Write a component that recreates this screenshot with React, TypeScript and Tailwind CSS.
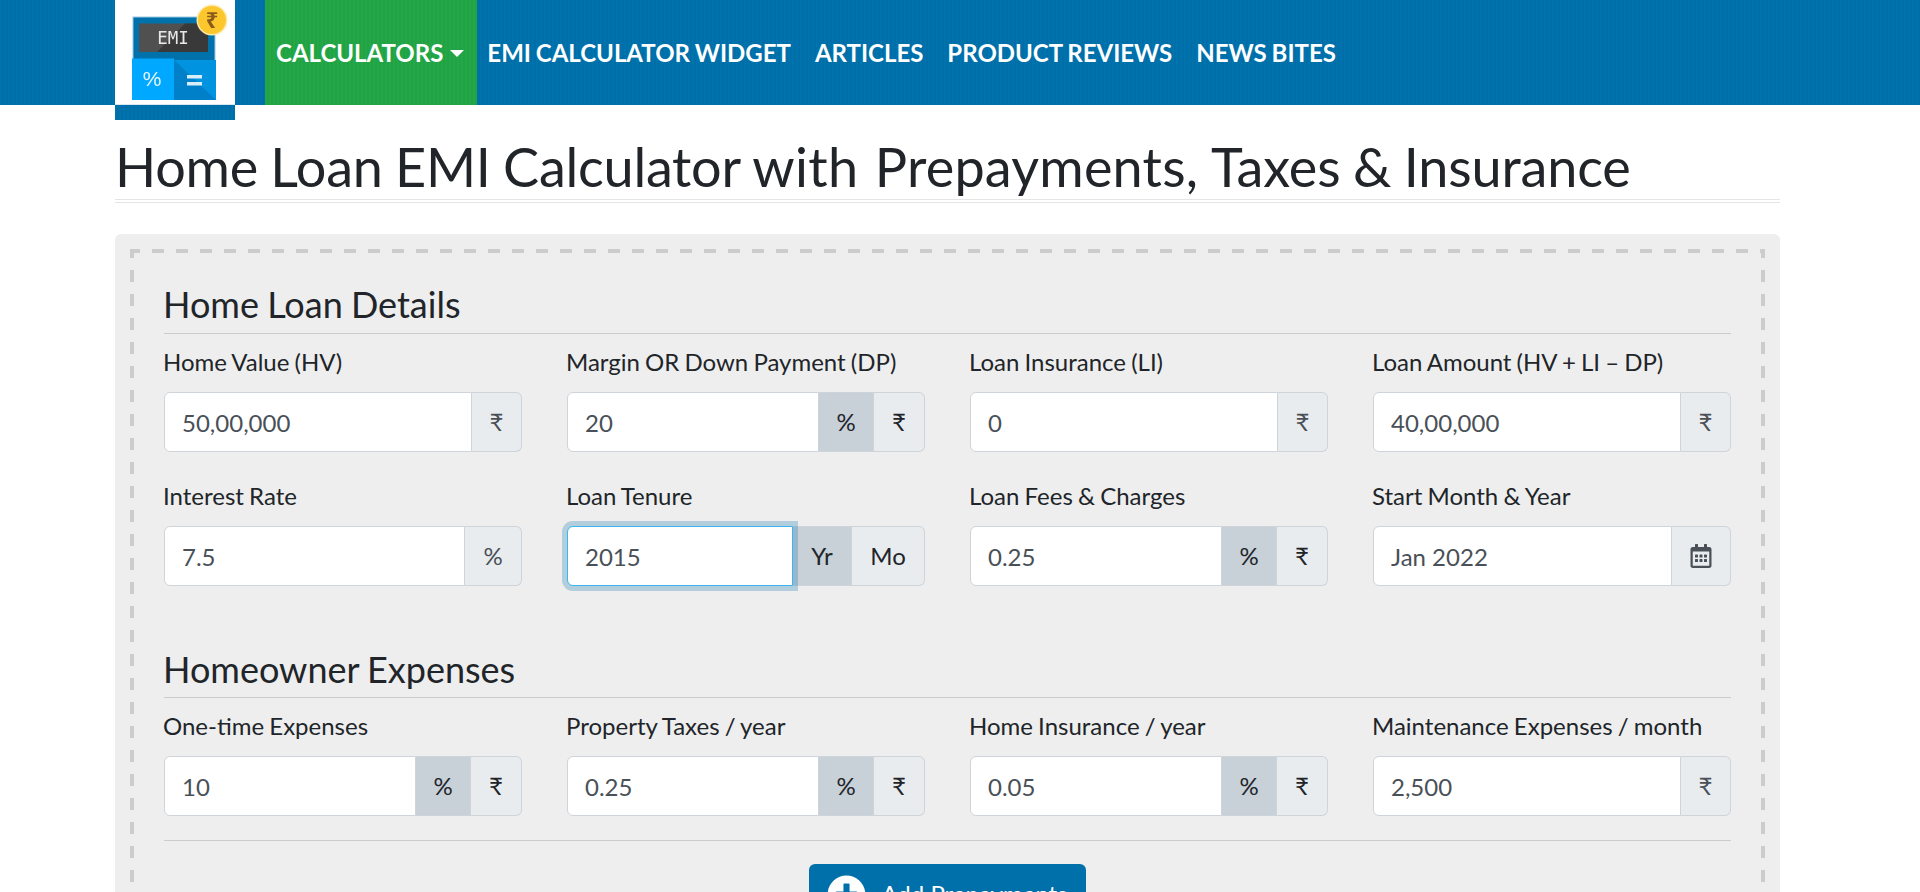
import React from "react";
import { FaRegCalendarAlt, FaPlusCircle } from "react-icons/fa";

type Addon = { t: React.ReactNode; on?: boolean; w: string; muted?: boolean };
const RS: Addon = { t: "₹", w: "w-[51px]" };
const RS_SOLO: Addon = { t: "₹", w: "w-[50px]", muted: true };
const PCT: Addon = { t: "%", on: true, w: "w-[55px]" };

function Field({ label, value, addons, focus }: { label: string; value: string; addons: Addon[]; focus?: boolean }) {
  return (
    <div className="flex flex-col">
      <label className="-ml-[1px] text-[24px] leading-[36px] [word-spacing:-1px] text-[#212529] mb-[12px]">{label}</label>
      <div className="flex h-[60px]">
        <input
          readOnly
          value={value}
          className={
            "min-w-0 flex-1 h-[60px] bg-white rounded-l-[6px] px-[17px] text-[24px] text-[#495057] outline-none border " +
            (focus
              ? "border-[#3cb5f0] relative z-10 shadow-[0_0_0_5px_rgba(0,112,170,0.25)]"
              : "border-[#ced4da]")
          }
        />
        {addons.map((a, i) => (
          <div
            key={i}
            className={
              "flex items-center justify-center h-[60px] text-[24px] border-y border-r border-[#ced4da] " +
              a.w + " " +
              (a.muted ? "text-[#495057] " : "text-[#212529] ") +
              (a.on ? "bg-[#c8d0d8] " : "bg-[#e9ecef] ") +
              (i === addons.length - 1 ? "rounded-r-[6px]" : "")
            }
          >
            {a.t}
          </div>
        ))}
      </div>
    </div>
  );
}

function Logo() {
  return (
    <svg width="120" height="105" viewBox="0 0 120 105" className="block blur-[0.4px]">
      <rect x="18" y="17" width="82" height="44" fill="#0071ab" stroke="#9cc8e2" strokeWidth="1" />
      <rect x="24" y="23.5" width="69" height="28.5" fill="#505050" />
      <polygon points="42,52 70,23.5 93,23.5 93,52" fill="#393939" />
      <text x="58" y="44" textAnchor="middle" fontFamily="'DejaVu Sans Mono', monospace" fontSize="17.5" fill="#e8e8e8">EMI</text>
      <rect x="17" y="58.5" width="42" height="41.5" fill="#00a9ff" />
      <rect x="59" y="60" width="42" height="40" fill="#0093e0" />
      <polygon points="59,60 101,100 59,100" fill="#0080c8" />
      <text x="37" y="85.5" textAnchor="middle" fontFamily="'Liberation Sans', sans-serif" fontSize="21" fill="#e8f6ff">%</text>
      <rect x="72" y="75" width="15" height="3.5" fill="#d9eefb" />
      <rect x="72" y="82" width="15" height="3.5" fill="#d9eefb" />
      <circle cx="97" cy="20" r="15.5" fill="#fdeaa8" />
      <circle cx="97" cy="20" r="14" fill="#fcc62d" />
      <text x="97" y="28" textAnchor="middle" fontFamily="'Noto Sans','DejaVu Sans',sans-serif" fontSize="22" fontWeight="700" fill="#8a5a1c">₹</text>
    </svg>
  );
}

const NAV = ["EMI CALCULATOR WIDGET", "ARTICLES", "PRODUCT REVIEWS", "NEWS BITES"];
const BLUE_TEXTURE = "[background:repeating-linear-gradient(90deg,#0072ac_0_2px,#006ea8_2px_4px)]";

export default function App() {
  return (
    <div className="h-[892px] overflow-hidden bg-white font-['Lato','Noto_Sans',sans-serif]">
      <nav className={"h-[105px] pl-[115px] flex " + BLUE_TEXTURE}>
        <div className={"w-[120px] h-[120px] shrink-0 relative z-10 " + BLUE_TEXTURE}>
          <div className="h-[105px] bg-white border-b border-[#d8e8f2]">
            <Logo />
          </div>
        </div>
        <div className="ml-[30px] flex items-center h-[105px] pl-[11px] pr-[13px] text-white font-bold text-[24px] [background:repeating-linear-gradient(90deg,#23a748_0_2px,#21a344_2px_4px)]">
          CALCULATORS
          <span className="ml-[7px] mt-[1px] w-0 h-0 border-x-[7px] border-x-transparent border-t-[7px] border-t-white" />
        </div>
        <div className="flex -ml-[2px]">
          {NAV.map((n) => (
            <div key={n} className="flex items-center h-[105px] px-[12px] text-white font-bold text-[24px] [word-spacing:-1px]">
              {n}
            </div>
          ))}
        </div>
      </nav>

      <main className="mx-[115px] w-[1665px]">
        <h1 className="mt-[29px] text-[54px] leading-[65px] [word-spacing:-1.2px] text-[#212529] font-normal border-b border-[#e5e5e5]">
          <span className="tracking-[-0.25px]">Home Loan EMI Calculator </span>
          <span className="tracking-[0.4px] [word-spacing:2px]">with </span>
          <span className="tracking-[0.2px]">Prepayments, </span>
          <span className="tracking-[-0.15px]">Taxes &amp; Insurance</span>
        </h1>
        <div className="h-[3px] border-b border-[#e5e5e5]" />

        <section className="mt-[31px] bg-[#eeeeee] rounded-[6px] p-[15px]">
          <div className="px-[34px] pt-[34px] pb-[40px] [background:repeating-linear-gradient(90deg,#cccccc_0_10px,transparent_10px_22px,#cccccc_22px_24px)_0_0/100%_4px_no-repeat,repeating-linear-gradient(180deg,#cccccc_0_9px,transparent_9px_21px,#cccccc_21px_24px)_0_0/4px_100%_no-repeat,repeating-linear-gradient(180deg,#cccccc_0_9px,transparent_9px_21px,#cccccc_21px_24px)_100%_0/4px_100%_no-repeat]">
            <h2 className="text-[36px] leading-[43px] [word-spacing:-1px] text-[#212529] font-normal pb-[7px] border-b border-[#cccccc]"><span className="-ml-[1px]">Home Loan Details</span></h2>
            <div className="grid grid-cols-4 gap-x-[45px] gap-y-[26px] mt-[10px]">
              <Field label="Home Value (HV)" value="50,00,000" addons={[RS_SOLO]} />
              <Field label="Margin OR Down Payment (DP)" value="20" addons={[PCT, RS]} />
              <Field label="Loan Insurance (LI)" value="0" addons={[RS_SOLO]} />
              <Field label="Loan Amount (HV + LI – DP)" value="40,00,000" addons={[RS_SOLO]} />
              <Field label="Interest Rate" value="7.5" addons={[{ t: "%", w: "w-[57px]", muted: true }]} />
              <Field label="Loan Tenure" value="2015" focus addons={[{ t: "Yr", on: true, w: "w-[59px]" }, { t: "Mo", w: "w-[73px]" }]} />
              <Field label="Loan Fees & Charges" value="0.25" addons={[PCT, RS]} />
              <Field label="Start Month & Year" value="Jan 2022" addons={[{ t: <FaRegCalendarAlt className="text-[24px] text-[#495057]" />, w: "w-[59px]" }]} />
            </div>

            <h2 className="mt-[62px] text-[36px] leading-[43px] [word-spacing:-1px] text-[#212529] font-normal pb-[6px] border-b border-[#cccccc]"><span className="-ml-[1px]">Homeowner Expenses</span></h2>
            <div className="grid grid-cols-4 gap-x-[45px] mt-[10px]">
              <Field label="One-time Expenses" value="10" addons={[PCT, RS]} />
              <Field label="Property Taxes / year" value="0.25" addons={[PCT, RS]} />
              <Field label="Home Insurance / year" value="0.05" addons={[PCT, RS]} />
              <Field label="Maintenance Expenses / month" value="2,500" addons={[RS_SOLO]} />
            </div>

            <hr className="mt-[24px] border-0 border-t border-[#cccccc]" />
            <div className="flex justify-center mt-[23px]">
              <button className="flex items-center gap-[15px] h-[60px] px-[18px] bg-[#0070aa] rounded-[6px] text-white text-[24px]">
                <FaPlusCircle className="text-[39px]" />
                Add Prepayments
              </button>
            </div>
          </div>
        </section>
      </main>
    </div>
  );
}
